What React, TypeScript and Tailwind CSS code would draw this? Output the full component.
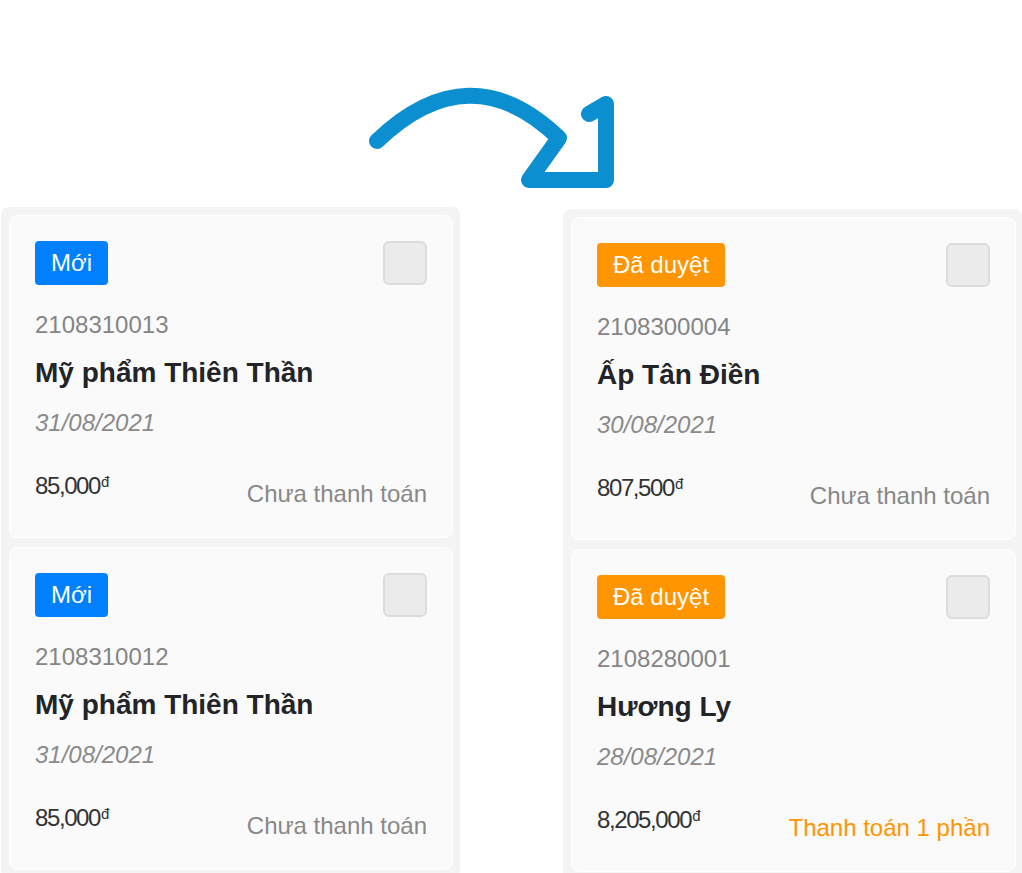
import React from "react";

type Order = {
  badge: "new" | "approved";
  id: string;
  name: string;
  date: string;
  price: string;
  status: string;
  partial?: boolean;
};

const left: Order[] = [
  { badge: "new", id: "2108310013", name: "Mỹ phẩm Thiên Thần", date: "31/08/2021", price: "85,000", status: "Chưa thanh toán" },
  { badge: "new", id: "2108310012", name: "Mỹ phẩm Thiên Thần", date: "31/08/2021", price: "85,000", status: "Chưa thanh toán" },
];

const right: Order[] = [
  { badge: "approved", id: "2108300004", name: "Ấp Tân Điền", date: "30/08/2021", price: "807,500", status: "Chưa thanh toán" },
  { badge: "approved", id: "2108280001", name: "Hương Ly", date: "28/08/2021", price: "8,205,000", status: "Thanh toán 1 phần", partial: true },
];

function Card({ o }: { o: Order }) {
  return (
    <div className="shrink-0 rounded-[8px] border border-white bg-[#fafafa] px-[25px] pt-[25px] pb-[25px]">
      <div className="flex h-[44px] items-start justify-between">
        {o.badge === "new" ? (
          <span className="flex h-[44px] items-center rounded-[4px] bg-[#0080ff] px-[16px] text-[24px] leading-none text-white">
            Mới
          </span>
        ) : (
          <span className="flex h-[44px] items-center rounded-[4px] bg-[#ff9500] px-[16px] text-[24px] leading-none text-white">
            Đã duyệt
          </span>
        )}
        <span className="h-[44px] w-[44px] rounded-[6px] border-2 border-[#dcdcdc] bg-[#ebebeb]" />
      </div>
      <div className="mt-[22px] text-[24px] leading-[36px] text-[#858585]">{o.id}</div>
      <div className="mt-[9px] text-[28px] font-bold leading-[42px] text-[#222427]">{o.name}</div>
      <div className="mt-[11px] text-[24px] italic leading-[36px] text-[#8a8a8a]">{o.date}</div>
      <div className="mt-[27px] flex items-start justify-between">
        <span className="text-[24px] leading-[36px] tracking-[-1.4px] text-[#333]">
          {o.price}
          <sup className="ml-[1px] text-[15px] tracking-normal">đ</sup>
        </span>
        <span className={"mt-[8px] text-[24px] leading-[36px] " + (o.partial ? "text-[#ff9500]" : "text-[#888888]")}>
          {o.status}
        </span>
      </div>
    </div>
  );
}

export default function App() {
  return (
    <div
      className="h-[873px] w-[1022px] overflow-hidden bg-white"
      style={{ fontFamily: '"Liberation Sans", Arial, sans-serif' }}
    >
      <svg className="block" width="1022" height="207" viewBox="0 0 1022 207" fill="none">
        <path
          d="M377 141 Q470 52 559 138 L529 180 L606 180 L606 104 L589 114"
          stroke="#0b8fd0"
          strokeWidth="16"
          strokeLinecap="round"
          strokeLinejoin="round"
        />
      </svg>
      <div className="flex items-start">
        <div className="ml-[1px] flex w-[459px] flex-col gap-[9px] rounded-[8px] bg-[#f4f4f4] pt-2 pl-2 pr-[7px] pb-2">
          {left.map((o, i) => (
            <Card key={i} o={o} />
          ))}
        </div>
        <div className="ml-[103px] mt-[2px] flex w-[459px] flex-col gap-[9px] rounded-[8px] bg-[#f4f4f4] pt-2 pl-2 pr-[6px] pb-2">
          {right.map((o, i) => (
            <Card key={i} o={o} />
          ))}
        </div>
      </div>
    </div>
  );
}
